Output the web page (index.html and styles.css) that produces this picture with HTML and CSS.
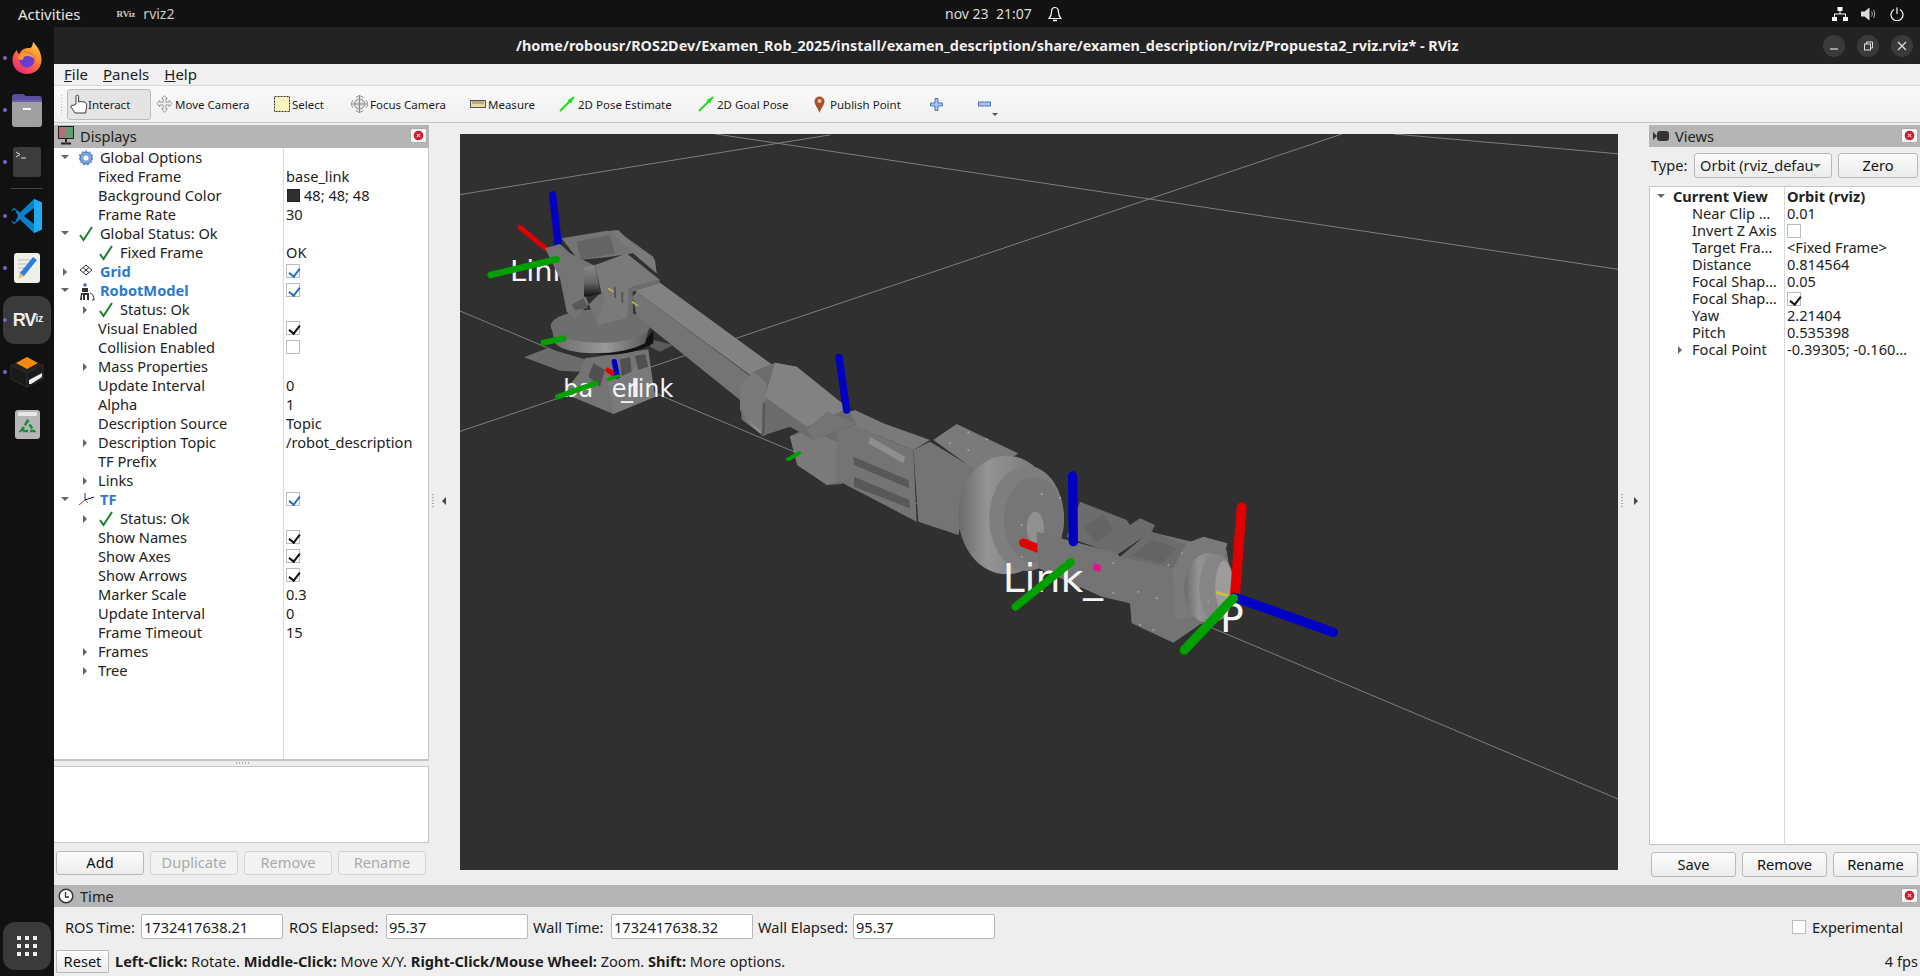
FILE: index.html
```html
<!DOCTYPE html>
<html lang="es"><head><meta charset="utf-8"><title>RViz</title><link rel="stylesheet" href="styles.css"></head>
<body>
<header class="topbar">
  <span class="activities">Activities</span>
  <span class="appname"><b class="miniviz">RViz</b>rviz2</span>
  <span class="clock">nov 23&nbsp;&nbsp;21:07
    <svg class="bell" width="14" height="16" viewBox="0 0 14 16"><path d="M7 1.500C4.500 1.500 3.500 3.500 3.500 6C3.500 9 2.500 11 1 12.500H13C11.500 11 10.500 9 10.500 6C10.500 3.500 9.500 1.500 7 1.500Z" fill="none" stroke="#fff" stroke-width="1.200"/><path d="M5 14.500H9" stroke="#fff" stroke-width="1.500"/></svg>
  </span>
  <span class="tray">
    <svg width="16" height="14" viewBox="0 0 16 14" fill="#fff"><rect x="5.500" y="0" width="5" height="4"/><rect x="0" y="10" width="5" height="4"/><rect x="11" y="10" width="5" height="4"/><path d="M7.500 4h1v2.500h5.500v3.500h-1v-2.500h-10v2.500h-1v-3.500h5.500z"/></svg>
    <svg width="16" height="14" viewBox="0 0 16 14" fill="#ddd"><path d="M0 4.500h3.500L8.500 0.500v13l-5-4H0z"/><path d="M10.500 4.500c1 1.500 1 3.500 0 5M12.500 3c1.600 2.400 1.600 5.600 0 8" stroke="#aaa" fill="none"/></svg>
    <svg width="14" height="14" viewBox="0 0 14 14" fill="none" stroke="#fff" stroke-width="1.200"><path d="M4 2.500A6 6 0 1 0 10 2.500"/><path d="M7 0.500V7"/></svg>
  </span>
</header>
<div class="desktop">
  <nav class="dock">
    <div class="dock-item"><i class="pip"></i>
      <svg width="30" height="32" viewBox="0 0 30 32"><defs><linearGradient id="ffa" x1="0.800" y1="0" x2="0.200" y2="1"><stop offset="0" stop-color="#ffd43a"/><stop offset=".45" stop-color="#ff7a2e"/><stop offset="1" stop-color="#ec1e7c"/></linearGradient></defs><path d="M15 32C6 32 .5 25.500 .5 18C.5 13 3 10 5 8C5 10 6 11.500 7.500 12C9 8 12 6 17 6C19 6 20.500 5 21 0C25 4 29.500 10 29.500 18C29.500 25.500 24 32 15 32Z" fill="url(#ffa)"/><circle cx="15" cy="18" r="7.500" fill="#6b3bd6"/><path d="M6 15C8 11 13 9.500 18 11.500C21 12.800 22.500 15.500 22.500 17C20.500 14.500 17 13.500 14 14C11 14.500 12 17 10 18C8 18.500 6.500 17 6 15Z" fill="#ff9a2e"/></svg></div>
    <div class="dock-item"><i class="pip"></i>
      <svg width="32" height="34" viewBox="0 0 32 34"><path d="M1 4Q1 1 4 1H12L15 3H28Q31 3 31 6V12H1Z" fill="#5a4f99"/><rect x="1" y="7" width="30" height="27" rx="3" fill="#a0a0a0"/><rect x="1" y="7" width="30" height="2" fill="#6a5fb0"/><rect x="12" y="15" width="8" height="2" fill="#fff"/></svg></div>
    <div class="dock-item"><i class="pip"></i>
      <svg width="28" height="30" viewBox="0 0 28 30"><rect width="28" height="30" rx="3" fill="#3c3c3c"/><path d="M3 5L7 7.500L3 10" stroke="#ddd" fill="none"/><path d="M8 11H13" stroke="#ddd"/></svg></div>
    <div class="dock-sep"></div>
    <div class="dock-item"><i class="pip"></i>
      <svg width="30" height="34" viewBox="0 0 30 34"><path d="M22 0L30 3.500V30.500L22 34L8 20.500L2.500 25L0 23.500V10.500L2.500 9L8 13.500Z" fill="#0a7fc9"/><path d="M22 0L30 3.500V30.500L22 34Z" fill="#23a9f2"/><path d="M22 9L12 17L22 25Z" fill="#111"/><path d="M0 12L3 10.500L6 17L3 23.500L0 22Z" fill="#111"/></svg></div>
    <div class="dock-item"><i class="pip"></i>
      <svg width="26" height="30" viewBox="0 0 26 30"><rect width="26" height="30" rx="3" fill="#f0f0ea"/><path d="M4 7H18M4 11H15M4 15H13M4 19H9" stroke="#bbb"/><path d="M6 20L19 4L23 7L10 23L5 25Z" fill="#2f7de1"/><path d="M6 20L10 23L4 26Z" fill="#f0c070"/></svg></div>
    <div class="dock-item dock-active"><i class="pip"></i><span class="rviz-logo">RV<small>iz</small></span></div>
    <div class="dock-item"><i class="pip"></i>
      <svg width="34" height="32" viewBox="0 0 34 32"><path d="M17 1L33 9L17 17L1 9Z" fill="#222"/><path d="M17 1L28 7L17 13L6 7Z" fill="#f28a10"/><path d="M1 9L17 17V31L1 23Z" fill="#1a1a1a" stroke="#2e2e2e"/><path d="M17 17L33 9V23L17 31Z" fill="#1a1a1a" stroke="#2e2e2e"/><path d="M19 24L32 17V21L21 28L19 28Z" fill="#eee"/></svg></div>
    <div class="dock-item"><i class="pip pip-off"></i>
      <svg width="25" height="29" viewBox="0 0 25 29"><rect width="25" height="29" rx="3" fill="#b6b6b6"/><rect x="3" y="2" width="19" height="4" rx="1" fill="#e8e8e8"/><path d="M12.500 11L8.500 17.500L6 21H19L16.500 17.500Z" fill="none" stroke="#1b8a3c" stroke-width="2.500" stroke-dasharray="5 2"/></svg></div>
    <div class="dock-grid"><span class="grid-dots"><i></i><i></i><i></i><i></i><i></i><i></i><i></i><i></i><i></i></span></div>
  </nav>
  <main class="window">
    <div class="titlebar">
      <span class="wintitle">/home/robousr/ROS2Dev/Examen_Rob_2025/install/examen_description/share/examen_description/rviz/Propuesta2_rviz.rviz* - RViz</span>
      <span class="winbtns">
        <span class="winbtn"><svg width="10" height="10" viewBox="0 0 10 10"><path d="M1 8H9" stroke="#ddd" stroke-width="1.200"/></svg></span>
        <span class="winbtn"><svg width="10" height="10" viewBox="0 0 10 10" fill="none" stroke="#ddd"><rect x="1.500" y="3" width="6" height="6"/><path d="M3.500 3V1H9.500V7H7.500"/></svg></span>
        <span class="winbtn"><svg width="10" height="10" viewBox="0 0 10 10"><path d="M1 1L9 9M9 1L1 9" stroke="#ddd" stroke-width="1.300"/></svg></span>
      </span>
    </div>
    <div class="menubar"><span><u>F</u>ile</span><span><u>P</u>anels</span><span><u>H</u>elp</span></div>
    <div class="toolbar">
      <i class="grip"></i>
      <span class="tool tool-on t-interact"><svg width="18" height="20" viewBox="0 0 18 20" fill="#fff" stroke="#222" stroke-width=".9"><path d="M6 10V2.500a1.300 1.300 0 0 1 2.600 0V8c.8-.6 5-.6 7 .5 1 .6 1.200 2 1 4l-1 6.500H5L1 13c-.6-1 .6-2.400 2-1.500z"/></svg>Interact</span>
      <span class="tool t-move"><svg width="17" height="20" viewBox="0 0 18 20" fill="#eee" stroke="#888" stroke-width=".8"><path d="M9 1L12 4.500H10.500V8H14V6L17 9.500L14 13V11H10.500V15H12L9 19L6 15H7.500V11H4V13L1 9.500L4 6V8H7.500V4.500H6Z"/></svg>Move Camera</span>
      <span class="tool t-select"><svg width="16" height="16" viewBox="0 0 16 16"><rect x=".5" y=".5" width="15" height="15" fill="#fbf6bd" stroke="#333" stroke-dasharray="2 1"/></svg>Select</span>
      <span class="tool t-focus"><svg width="17" height="20" viewBox="0 0 18 20" fill="none" stroke="#888"><circle cx="9" cy="10" r="5.500" fill="#ddd"/><path d="M9 1V19M0 10H18M5 3L9 1L13 3M5 17L9 19L13 17M2 6L0 10L2 14M16 6L18 10L16 14"/></svg>Focus Camera</span>
      <span class="tool t-measure"><svg width="16" height="8" viewBox="0 0 16 8"><rect x=".5" y=".5" width="15" height="7" fill="#e8dca0" stroke="#555"/><path d="M3 1V4M5 1V4M7 1V4M9 1V4M11 1V4M13 1V4" stroke="#555" stroke-width=".7"/></svg>Measure</span>
      <span class="tool t-pose"><svg width="16" height="16" viewBox="0 0 16 16"><path d="M1 15L15 1" stroke="#1de01d" stroke-width="2"/><path d="M15 1L8.500 4L12 7.500Z" fill="#1de01d"/></svg>2D Pose Estimate</span>
      <span class="tool t-goal"><svg width="16" height="16" viewBox="0 0 16 16"><path d="M1 15L15 1" stroke="#1de01d" stroke-width="2"/><path d="M15 1L8.500 4L12 7.500Z" fill="#1de01d"/></svg>2D Goal Pose</span>
      <span class="tool t-point"><svg width="11" height="17" viewBox="0 0 11 17"><path d="M5.500 17C4 12 .5 9 .5 5.500a5 5 0 0 1 10 0C10.500 9 7 12 5.500 17Z" fill="#a8502c"/><circle cx="5.500" cy="5" r="2" fill="#f3c3a0"/></svg>Publish Point</span>
      <span class="tool t-plus"><svg width="13" height="13" viewBox="0 0 13 13"><path d="M5 .5H8V5H12.500V8H8V12.500H5V8H.5V5H5Z" fill="#a9c4ea" stroke="#4a78b8"/></svg></span>
      <span class="tool t-minus"><svg width="13" height="6" viewBox="0 0 13 6"><rect x=".5" y="1" width="12" height="4" fill="#a9c4ea" stroke="#4a78b8"/></svg><i class="tool-more"></i></span>
    </div>
    <div class="work">
      <section class="displays">
        <div class="dockhead dh-d"><svg class="dh-ico" width="16" height="19" viewBox="0 0 16 19"><rect x=".5" y=".5" width="15" height="12" fill="#5f9d74" stroke="#222"/><rect x="1.500" y="1.500" width="6" height="10" fill="#b96a7b"/><path d="M8 13V16M3 17.500H13" stroke="#222" stroke-width="2"/></svg><span>Displays</span><svg class="dh-close" width="17" height="15" viewBox="0 0 17 15"><rect x=".5" y=".5" width="16" height="14" rx="2" fill="#f8f8f8" stroke="#aaa"/><circle cx="8.500" cy="7.500" r="4.800" fill="#c8202c"/><path d="M6.800 5.800L10.200 9.200M10.200 5.800L6.800 9.200" stroke="#f3c0c0" stroke-width="1.100"/></svg></div>
        <div class="tree dtree">
          <div class="row"><i class="tw open a0"></i><svg class="ic" width="14" height="16" viewBox="0 0 14 16"><circle cx="7" cy="8" r="6" fill="#7ea4dc" stroke="#3f6fb5"/><circle cx="7" cy="8" r="2.500" fill="#fff"/><circle cx="7" cy="8" r="7" fill="none" stroke="#3f6fb5" stroke-dasharray="2 2" stroke-width="1"/></svg><span class="l l0">Global Options</span><span class="v"></span></div>
          <div class="row"><span class="l l1">Fixed Frame</span><span class="v">base_link</span></div>
          <div class="row"><span class="l l1">Background Color</span><span class="v"><i class="swatch"></i>48; 48; 48</span></div>
          <div class="row"><span class="l l1">Frame Rate</span><span class="v">30</span></div>
          <div class="row"><i class="tw open a0"></i><svg class="ic" width="14" height="16" viewBox="0 0 14 16"><path class="ck" d="M1 9L4.500 14L13 1"/></svg><span class="l l0">Global Status: Ok</span><span class="v"></span></div>
          <div class="row"><svg class="ic i1" width="14" height="16" viewBox="0 0 14 16"><path class="ck" d="M1 9L4.500 14L13 1"/></svg><span class="l l1s">Fixed Frame</span><span class="v">OK</span></div>
          <div class="row"><i class="tw a0"></i><svg class="ic" width="14" height="12" viewBox="0 0 14 12" fill="none" stroke="#333"><path d="M7 1L13 6L7 11L1 6Z"/><path d="M4 3.500L10 8.500M10 3.500L4 8.500"/></svg><span class="l l0 blue">Grid</span><span class="v"><i class="cb on-b"></i></span></div>
          <div class="row"><i class="tw open a0"></i><svg class="ic" width="16" height="18" viewBox="0 0 16 18" fill="#333"><circle cx="6" cy="2" r="1.800" fill="#3f6fb5"/><rect x="3" y="5" width="6" height="4"/><path d="M2 10H10V17H8V12H6V17H4V12H3V17H1Z"/><path d="M11 10Q15 11 15 17H13" fill="none" stroke="#333"/></svg><span class="l l0 blue">RobotModel</span><span class="v"><i class="cb on-b"></i></span></div>
          <div class="row"><i class="tw a1"></i><svg class="ic i1" width="14" height="16" viewBox="0 0 14 16"><path class="ck" d="M1 9L4.500 14L13 1"/></svg><span class="l l1s">Status: Ok</span><span class="v"></span></div>
          <div class="row"><span class="l l1">Visual Enabled</span><span class="v"><i class="cb on"></i></span></div>
          <div class="row"><span class="l l1">Collision Enabled</span><span class="v"><i class="cb"></i></span></div>
          <div class="row"><i class="tw a1"></i><span class="l l1">Mass Properties</span><span class="v"></span></div>
          <div class="row"><span class="l l1">Update Interval</span><span class="v">0</span></div>
          <div class="row"><span class="l l1">Alpha</span><span class="v">1</span></div>
          <div class="row"><span class="l l1">Description Source</span><span class="v">Topic</span></div>
          <div class="row"><i class="tw a1"></i><span class="l l1">Description Topic</span><span class="v">/robot_description</span></div>
          <div class="row"><span class="l l1">TF Prefix</span><span class="v"></span></div>
          <div class="row"><i class="tw a1"></i><span class="l l1">Links</span><span class="v"></span></div>
          <div class="row"><i class="tw open a0"></i><svg class="ic" width="16" height="14" viewBox="0 0 16 14" fill="none"><path d="M6 8V1" stroke="#1f1fc8"/><path d="M6 8L15 5" stroke="#111"/><path d="M6 8L0 13" stroke="#e02020"/><path d="M6 8L9 11" stroke="#22b022"/></svg><span class="l l0 blue">TF</span><span class="v"><i class="cb on-b"></i></span></div>
          <div class="row"><i class="tw a1"></i><svg class="ic i1" width="14" height="16" viewBox="0 0 14 16"><path class="ck" d="M1 9L4.500 14L13 1"/></svg><span class="l l1s">Status: Ok</span><span class="v"></span></div>
          <div class="row"><span class="l l1">Show Names</span><span class="v"><i class="cb on"></i></span></div>
          <div class="row"><span class="l l1">Show Axes</span><span class="v"><i class="cb on"></i></span></div>
          <div class="row"><span class="l l1">Show Arrows</span><span class="v"><i class="cb on"></i></span></div>
          <div class="row"><span class="l l1">Marker Scale</span><span class="v">0.3</span></div>
          <div class="row"><span class="l l1">Update Interval</span><span class="v">0</span></div>
          <div class="row"><span class="l l1">Frame Timeout</span><span class="v">15</span></div>
          <div class="row"><i class="tw a1"></i><span class="l l1">Frames</span><span class="v"></span></div>
          <div class="row"><i class="tw a1"></i><span class="l l1">Tree</span><span class="v"></span></div>
          <div class="filler"></div>
        </div>
        <div class="hsplit"></div>
        <div class="descbox"></div>
        <div class="btnrow d-btns"><span class="btn">Add</span><span class="btn off">Duplicate</span><span class="btn off">Remove</span><span class="btn off">Rename</span></div>
      </section>
      <div class="vsplit"><i class="arrow-l"></i></div>
      <section class="viewport">
        <svg class="scene" viewBox="460 134 1158 736" width="1158" height="736">
          <defs>
            <linearGradient id="cyl" x1="0" y1="0" x2="1" y2="0"><stop offset="0" stop-color="#6a6a6a"/><stop offset=".3" stop-color="#949494"/><stop offset="1" stop-color="#707070"/></linearGradient>
            <linearGradient id="disc" x1="0" y1="0" x2="1" y2="0"><stop offset="0" stop-color="#6a6a6a"/><stop offset=".55" stop-color="#989898"/><stop offset="1" stop-color="#5a5a5a"/></linearGradient>
            <linearGradient id="shoulder" x1="0" y1="0" x2="0" y2="1"><stop offset="0" stop-color="#888"/><stop offset=".55" stop-color="#666"/><stop offset="1" stop-color="#111"/></linearGradient>
          </defs>
          <g class="gridlines">
            <path d="M460 194.600L830.600 134.800"/>
            <path d="M715.700 134L1618 269.300"/>
            <path d="M1342 134L460 431.400"/>
            <path d="M1394 134L1618 153.800"/>
            <path d="M460 311L1618 799"/>
          </g>
          <g transform="translate(460 170) scale(.33333)">
            <text class="lbl f87" x="150" y="333">Link</text>
            <rect x="553" y="517" width="28" height="6" fill="#eee"/>
            <path class="axis" d="M180 172L260 238" stroke="#e00000" stroke-width="14"/>
            <path class="axis" d="M278 75L295 225" stroke="#0000c4" stroke-width="22"/>
            <path class="m2" d="M192 562L262 535L400 575L360 605L300 602Z"/>
            <path class="m1" d="M375 565L565 538L585 680L460 732L310 670L360 605Z"/>
            <path class="m3" d="M440 625L568 578L585 680L460 732Z"/>
            <path class="dk" d="M400 580L435 600L420 650L385 620Z"/>
            <path class="dk" d="M480 568L510 562L515 605L485 618Z"/>
            <path class="dk" d="M525 558L555 552L565 590L535 600Z"/>
            <path d="M560 505L640 525L600 545L570 530Z" fill="#5b5b5b"/>
            <path d="M380 545C450 560 540 545 580 480L580 520C530 550 450 565 380 545Z" fill="#111"/>
            <path d="M273 465L285 520C320 560 480 560 555 520L570 465Z" fill="url(#disc)"/>
            <ellipse cx="421" cy="468" rx="149" ry="50" fill="#6e6e6e"/>
            <path class="m1" d="M345 445L320 425L300 325L255 235L300 222L330 250L400 285L375 375L412 465L500 440L495 395L420 370Z"/>
            <path class="m3" d="M410 465L440 370L505 410L500 445Z"/>
            <path class="dk2" d="M335 405L370 385L385 415L345 420Z"/>
            <path class="m1" d="M305 205L440 182L475 185L580 260L590 310L520 250L440 262L355 270Z"/>
            <path class="m5" d="M350 215L450 195L465 250L362 270Z"/>
            <path class="m3" d="M450 182L475 180L510 215L585 270L590 310L520 250Z"/>
            <path d="M372 292L405 285L422 372L372 380Z" fill="url(#shoulder)"/>
            <path class="m3" d="M405 285L500 250L600 330L515 352L505 430L425 372Z"/>
            <path class="m2" d="M505 355L597 328L600 338L518 365L520 440L505 432Z"/>
            <path class="m1" d="M518 380L530 365L880 625L840 690L530 440Z"/>
            <path class="m4" d="M525 362L600 338L945 590L870 615Z"/>
            <path d="M445 355L460 365M515 395L535 408" stroke="#c8c040" stroke-width="4"/>
            <path class="dk2" d="M483 365L490 367L490 400L484 398ZM462 350L468 352L468 385L462 383Z"/>
            <path class="axis" d="M92 315L290 268" stroke="#00a000" stroke-width="20"/>
            <path class="axis" d="M250 518L310 505" stroke="#00a000" stroke-width="18"/>
            <path class="axis" d="M443 600L460 612" stroke="#e00000" stroke-width="14"/>
            <path class="axis" d="M463 575L472 618" stroke="#0000c4" stroke-width="16"/>
            <path class="axis" d="M445 628L475 618" stroke="#00a000" stroke-width="10"/>
            <text class="lbl f72" x="310" y="680">ba</text>
            <text class="lbl f72" x="455" y="680">er</text>
            <text class="lbl f72" x="483" y="680">_l</text>
            <text class="lbl f72" x="513" y="680">link</text>
            <path class="axis" d="M293 680L408 640" stroke="#00a000" stroke-width="16"/>
          </g>
          <g transform="translate(460 130) scale(.7413 .4785)">
            <path class="m2" d="M505 595L575 620L525 700L515 740L495 742L455 700L445 640Z"/>
            <path class="m3" d="M445 640L470 628L520 645L525 665L510 735L495 742L455 700Z"/>
            <path d="M378 565L400 510L425 490L470 560L410 640L380 605Z" fill="url(#cyl)"/>
            <path class="m3" d="M425 490L450 495L525 590L470 640L408 560Z"/>
            <path class="m2" d="M465 625L525 585L550 600L575 622L525 660L505 650Z"/>
            <path class="dk2" d="M408 575L412 640L406 640Z"/>
            <path class="axis" d="M443 688L457 675" stroke="#00a000" stroke-width="7"/>
            <path class="axis" d="M512 480L520 590" stroke="#0000c4" stroke-width="8"/>
          </g>
          <g transform="translate(850 400) scale(.33333)">
            <path class="m1" d="M-40 55L190 150L200 365L-40 240Z"/>
            <path class="dk2" d="M10 170L175 240L178 265L12 195Z"/>
            <path class="dk2" d="M12 230L178 300L180 325L12 260Z"/>
            <path class="m3" d="M-40 55L15 30L100 70L240 120L190 150Z"/>
            <path d="M60 110L165 170L160 190L55 130Z" fill="#8e8e8e"/>
            <path class="m1" d="M190 150L240 125L380 210L360 260L325 405L205 365Z"/>
            <path class="m3" d="M250 120L320 72L505 160L400 235L375 210Z"/>
            <ellipse cx="470" cy="345" rx="145" ry="178" fill="url(#cyl)"/>
            <ellipse cx="530" cy="355" rx="112" ry="158" fill="#7e7e7e"/>
            <ellipse cx="552" cy="360" rx="90" ry="128" fill="#767676"/>
            <ellipse cx="556" cy="385" rx="26" ry="50" fill="#909090"/>
            <path class="axis" d="M520 428L562 445" stroke="#e00000" stroke-width="26"/>
            <path class="m2" d="M690 305L830 360L840 375L870 355L915 375L905 395L800 465L650 410Z"/>
            <path class="m1" d="M560 395L800 460L810 470L900 395L1130 450L1150 590L1040 680L970 728L845 670L840 610L755 590L565 505Z"/>
            <path class="m2" d="M812 470L905 395L1010 435L968 505Z"/>
            <path class="m5" d="M845 465L908 420L980 445L935 490Z"/>
            <path class="m5" d="M700 380L760 345L790 390L740 430Z"/>
            <path class="m3" d="M970 505L1010 430L1060 410L1132 430L1080 640L975 660Z"/>
            <path class="m1" d="M650 450L715 450L730 475L715 545L680 570L640 520Z"/>
            <ellipse cx="1075" cy="565" rx="72" ry="105" fill="url(#cyl)"/>
            <ellipse cx="1100" cy="562" rx="52" ry="100" fill="#858585"/>
            <ellipse cx="1122" cy="560" rx="26" ry="78" fill="#9c9c9c"/>
            <path d="M730 490L752 495L752 516L730 510Z" fill="#e0148c"/>
            <path d="M1098 577L1135 587" stroke="#c8c040" stroke-width="9"/>
            <path class="holes" d="M575 283h.1M630 293h.1M515 375h.1M515 470h.1M660 410h.1M790 490h.1M865 575h.1M920 595h.1M870 675h.1M910 690h.1M790 578h.1M1110 520h.1M1075 605h.1M955 495h.1M995 460h.1M300 130h.1M355 98h.1M410 118h.1M355 150h.1"/>
            <text class="lbl f122" x="458" y="575">Link_</text>
            <text class="lbl f122" x="1110" y="695">P</text>
            <path class="axis" d="M668 228L670 425" stroke="#0000c4" stroke-width="28"/>
            <path class="axis" d="M497 620L662 487" stroke="#00a000" stroke-width="24"/>
            <path class="axis" d="M1175 322L1155 585" stroke="#e00000" stroke-width="30"/>
            <path class="axis" d="M1155 592L1450 697" stroke="#0000c4" stroke-width="28"/>
            <path class="axis" d="M1150 595L1003 750" stroke="#00a000" stroke-width="28"/>
          </g>
          <g transform="translate(460 170) scale(.33333)">
            <path class="m2" d="M840 650L880 605L945 578L1010 590L1165 715L1190 765L1060 810L990 770L915 795L840 720Z"/>
            <path class="m3" d="M840 650L880 605L920 640L910 790L840 720Z"/>
            <path class="m4" d="M945 578L1010 590L1165 715L1040 770L915 680Z"/>
            <path class="m1" d="M1040 780L1100 725L1190 760L1060 810Z"/>
            <path class="dk2" d="M908 700L916 695L914 790L906 785Z"/>
            <path class="axis" d="M1137 562L1160 720" stroke="#0000c4" stroke-width="22"/>
          </g>
        </svg>
      </section>
      <div class="vsplit vsplit-r"><i class="arrow-r"></i></div>
      <section class="views">
        <div class="dockhead vh"><svg class="dh-ico" width="16" height="10" viewBox="0 0 16 10" fill="#333"><path d="M0 1L4 5L0 9Z"/><rect x="4" y="0" width="12" height="10" rx="3"/></svg><span>Views</span><svg class="dh-close" width="17" height="15" viewBox="0 0 17 15"><rect x=".5" y=".5" width="16" height="14" rx="2" fill="#f8f8f8" stroke="#aaa"/><circle cx="8.500" cy="7.500" r="4.800" fill="#c8202c"/><path d="M6.800 5.800L10.200 9.200M10.200 5.800L6.800 9.200" stroke="#f3c0c0" stroke-width="1.100"/></svg></div>
        <div class="typerow"><span class="typelabel">Type:</span><span class="combo"><span class="combo-t">Orbit (rviz_defau</span><i class="combo-a"></i></span><span class="btn zero">Zero</span></div>
        <div class="tree vtree">
          <div class="vrow"><i class="tw open v0"></i><span class="vl vb">Current View</span><span class="vv vb">Orbit (rviz)</span></div>
          <div class="vrow"><span class="vl">Near Clip …</span><span class="vv">0.01</span></div>
          <div class="vrow"><span class="vl">Invert Z Axis</span><span class="vv"><i class="cb"></i></span></div>
          <div class="vrow"><span class="vl">Target Fra…</span><span class="vv">&lt;Fixed Frame&gt;</span></div>
          <div class="vrow"><span class="vl">Distance</span><span class="vv">0.814564</span></div>
          <div class="vrow"><span class="vl">Focal Shap…</span><span class="vv">0.05</span></div>
          <div class="vrow"><span class="vl">Focal Shap…</span><span class="vv"><i class="cb on"></i></span></div>
          <div class="vrow"><span class="vl">Yaw</span><span class="vv">2.21404</span></div>
          <div class="vrow"><span class="vl">Pitch</span><span class="vv">0.535398</span></div>
          <div class="vrow"><i class="tw v1"></i><span class="vl">Focal Point</span><span class="vv">-0.39305; -0.160…</span></div>
          <div class="filler vfill"></div>
        </div>
        <div class="btnrow v-btns"><span class="btn">Save</span><span class="btn">Remove</span><span class="btn">Rename</span></div>
      </section>
    </div>
    <section class="timepanel">
      <div class="dockhead th"><svg class="dh-ico" width="16" height="16" viewBox="0 0 16 16" fill="none"><circle cx="8" cy="8" r="6.800" fill="#fff" stroke="#333" stroke-width="1.500"/><path d="M7.500 4V9H11" stroke="#333" stroke-width="1.300"/></svg><span>Time</span><svg class="dh-close" width="17" height="15" viewBox="0 0 17 15"><rect x=".5" y=".5" width="16" height="14" rx="2" fill="#f8f8f8" stroke="#aaa"/><circle cx="8.500" cy="7.500" r="4.800" fill="#c8202c"/><path d="M6.800 5.800L10.200 9.200M10.200 5.800L6.800 9.200" stroke="#f3c0c0" stroke-width="1.100"/></svg></div>
      <div class="timerow">
        <span class="tl tl1">ROS Time:</span><span class="inp">1732417638.21</span>
        <span class="tl tl2">ROS Elapsed:</span><span class="inp">95.37</span>
        <span class="tl tl3">Wall Time:</span><span class="inp">1732417638.32</span>
        <span class="tl tl4">Wall Elapsed:</span><span class="inp">95.37</span>
        <span class="exp"><i class="cb"></i>Experimental</span>
      </div>
      <div class="statusrow"><span class="btn reset">Reset</span><span class="hint"><b>Left-Click:</b> Rotate. <b>Middle-Click:</b> Move X/Y. <b>Right-Click/Mouse Wheel:</b> Zoom. <b>Shift:</b> More options.</span><span class="fps">4 fps</span></div>
    </section>
  </main>
</div>
</body></html>
```
FILE: styles.css
```css
*{box-sizing:border-box}
html,body{margin:0;padding:0;width:1920px;height:976px;overflow:hidden}
body{display:flex;flex-direction:column;font-family:"Noto Sans",sans-serif;font-size:14.6px;color:#1c1c1c;background:#efefef}
.topbar{height:27px;background:#121212;color:#e6e6e6;position:relative;display:flex;align-items:center;font-size:15px;flex:none}
.activities{margin-left:18px}
.appname{margin-left:36px;display:flex;align-items:center;color:#c8c8c8;font-size:14px}
.miniviz{font:bold 9px "Liberation Serif",serif;margin-right:8px;color:#ccc}
.clock{position:absolute;left:945px;top:4px;color:#ddd;display:flex;gap:16px;align-items:center;font-size:14px}
.tray{margin-left:auto;margin-right:16px;display:flex;gap:13px;align-items:center}
.desktop{flex:1;display:flex;min-height:0}
.dock{width:54px;background:#111;flex:none;display:flex;flex-direction:column;align-items:center;position:relative;padding-top:5px}
.dock-item{width:54px;height:52px;display:flex;align-items:center;justify-content:center;position:relative;flex:none}
.dock-sep{width:32px;height:1px;background:#444;margin:0 0 1px}
.pip{position:absolute;left:3px;top:50%;width:4px;height:4px;border-radius:50%;background:#7466c9;margin-top:-2px}
.pip-off{display:none}
.dock-active{background:#3a3a3a;border-radius:12px;width:48px;height:48px;margin:2px auto}
.dock-active .pip{left:0}
.rviz-logo{font:bold 18px "Liberation Sans",sans-serif;color:#eee;letter-spacing:-1px;margin-left:2px}
.rviz-logo small{font-size:10px;vertical-align:4px;letter-spacing:0}
.dock-grid{margin-top:auto;margin-bottom:6px;width:48px;height:48px;background:#3a3a3a;border-radius:12px;display:flex;align-items:center;justify-content:center}
.grid-dots{display:grid;grid-template-columns:repeat(3,4px);gap:4px}
.grid-dots i{width:4px;height:4px;background:#eee}
.window{flex:1;min-width:0;display:flex;flex-direction:column}
.titlebar{height:37px;background:#232323;color:#f0f0f0;display:flex;align-items:center;position:relative;flex:none}
.wintitle{position:absolute;left:462px;font-weight:700;font-size:14.400px;white-space:nowrap}
.winbtns{margin-left:auto;margin-right:7px;display:flex;gap:12px}
.winbtn{width:22px;height:22px;border-radius:50%;background:#3a3a3a;display:flex;align-items:center;justify-content:center}
.menubar{height:21px;background:#f0f0f0;display:flex;gap:15px;padding:0 0 2px 10px;align-items:center;flex:none;font-size:15px}
.toolbar{height:38px;background:linear-gradient(#fafafa,#f0f0f0);border-top:1px solid #d8d8d8;border-bottom:1px solid #c4c4c4;display:flex;align-items:center;position:relative;flex:none;font-size:11.500px}
.grip{width:3px;height:20px;margin:0 4px 0 6px;background:radial-gradient(#bbb 40%,transparent 45%) 0 0/3px 3px;flex:none}
.tool{display:flex;align-items:center;height:31px;white-space:nowrap;flex:none}
.tool-on{background:#e4e4e4;border:1px solid #bbb;border-radius:3px;width:84px;padding-left:2px}
.t-move{margin-left:5px;width:118px;gap:2px}
.t-select{width:77px;gap:2px}
.t-focus{width:119px;gap:2px}
.t-measure{width:89px;gap:2px}
.t-pose{width:139px;gap:3px}
.t-goal{width:116px;gap:3px}
.t-point{width:115px;gap:5px}
.t-plus{width:48px;padding-left:1px}
.t-minus{width:40px;position:relative;padding-left:1px}
.tool-more{position:absolute;left:15px;bottom:4px;border:3px solid transparent;border-top:3px solid #555;border-bottom:0}
.work{height:762px;display:flex;flex:none;background:#eee}
.displays{width:375px;flex:none;display:flex;flex-direction:column;padding-top:2px}
.dockhead{height:23px;background:#b5b5b5;display:flex;align-items:center;padding-left:4px;gap:6px;position:relative;flex:none;font-size:14.600px;color:#222}
.dh-d{padding-bottom:2px}
.dh-ico{flex:none}
.dh-close{position:absolute;right:2px;top:3px}
.tree{background:#fff;font-size:14.600px;color:#222}
.dtree{height:613px;border-right:1px solid #c6c6c6;border-bottom:2px solid #c6c6c6;display:flex;flex-direction:column}
.row{height:19px;display:flex;align-items:center;position:relative;flex:none;white-space:nowrap}
.filler{flex:1;width:230px;border-right:1px solid #d9d9d9}
.l{position:absolute;top:0;line-height:19px}
.l0{left:46px}
.l1{left:44px}
.l1s{left:66px}
.blue{color:#2a7ad2;font-weight:700}
.v{position:absolute;left:229px;width:145px;height:19px;line-height:19px;border-left:1px solid #d9d9d9;padding-left:2px;display:flex;align-items:center}
.tw{position:absolute;top:6px;border:4px solid transparent;border-left:4px solid #666;border-right:0;margin-left:2px}
.tw.open{border:4px solid transparent;border-top:4px solid #666;border-bottom:0;margin:1px 0 0}
.a0{left:7px}
.a1{left:27px}
.ic{position:absolute;left:25px;top:2px}
.i1{left:45px}
.ck{fill:none;stroke:#1f7f2a;stroke-width:2}
.cb{display:block;width:14px;height:14px;border:1px solid #bcbcbc;background:#fff;position:relative;flex:none}
.v .cb{top:-1px}
.cb.on::after,.cb.on-b::after{content:"";position:absolute;left:4px;top:1px;width:5px;height:9px;border:solid #111;border-width:0 2px 2px 0;transform:rotate(38deg)}
.cb.on-b::after{border-color:#2a6fc0}
.swatch{display:block;width:13px;height:13px;background:#303030;border:1px solid #222;margin:0 4px 0 1px}
.hsplit{height:5px;position:relative}
.hsplit::after{content:"";position:absolute;left:181px;top:1px;width:16px;height:2px;background:radial-gradient(#aaa 40%,transparent 45%) 0 0/3px 2px}
.descbox{height:77px;background:#fff;border:1px solid #c6c6c6;border-left:0}
.btnrow{display:flex}
.d-btns{padding:8px 2px 0;gap:6px}
.btn{display:flex;align-items:center;justify-content:center;height:24px;width:88px;padding-bottom:2px;background:linear-gradient(#fcfcfc,#ececec);border:1px solid #b9b9b9;border-radius:3px;font-size:14.600px;color:#111;flex:none}
.btn.off{color:#aaa;border-color:#d4d4d4;background:#f2f2f2}
.vsplit{width:31px;flex:none;display:flex;align-items:center;justify-content:flex-start;padding:0 0 6px 13px;position:relative}
.vsplit::before{content:"";position:absolute;left:3px;top:370px;width:2px;height:16px;background:radial-gradient(#aaa 40%,transparent 45%) 0 0/2px 3px}
.vsplit-r{padding-left:16px}
.arrow-l{border:4px solid transparent;border-right:4px solid #444;border-left:0}
.arrow-r{border:4px solid transparent;border-left:4px solid #444;border-right:0}
.viewport{width:1158px;height:736px;margin-top:11px;background:#303030;flex:none;overflow:hidden}
.scene{display:block}
.gridlines path{stroke:#7e7e7e;stroke-width:1;fill:none}
.axis{fill:none;stroke-linecap:round}
.m1{fill:#747474}
.m2{fill:#6c6c6c}
.m3{fill:#7a7a7a}
.m4{fill:#828282}
.m5{fill:#646464}
.dk{fill:#505050}
.dk2{fill:#585858}
.holes{stroke:#a4a4a4;stroke-width:6;stroke-linecap:round;fill:none}
.lbl{fill:#f4f4f4;font-family:"DejaVu Sans",sans-serif}
.f87{font-size:87px}
.f72{font-size:72px}
.f122{font-size:118px}
.views{flex:1;min-width:0;display:flex;flex-direction:column;padding-top:2px}
.vh{height:22px}
.typerow{display:flex;align-items:center;height:25px;margin-top:6px;font-size:14.600px}
.typelabel{margin-left:2px;width:43px;padding-bottom:2px}
.combo{width:138px;height:25px;border:1px solid #b9b9b9;border-radius:3px;background:linear-gradient(#fcfcfc,#ececec);display:flex;align-items:center;padding:0 0 2px 5px;position:relative;overflow:hidden;flex:none}
.combo-t{white-space:nowrap}
.combo-a{position:absolute;right:10px;top:10px;border:4px solid transparent;border-top:4px solid #666;border-bottom:0}
.zero{margin-left:6px;width:80px;height:25px}
.vtree{margin-top:8px;height:659px;border:1px solid #c6c6c6;border-right:0;display:flex;flex-direction:column;font-size:14.600px}
.vrow{height:17px;display:flex;align-items:center;position:relative;flex:none;white-space:nowrap}
.vrow:first-child{height:18px}
.vl{position:absolute;left:42px;line-height:17px}
.vb{font-weight:700}
.vl.vb{left:23px}
.vv{position:absolute;left:134px;width:136px;height:100%;border-left:1px solid #d9d9d9;padding-left:2px;line-height:17px;display:flex;align-items:center}
.v0{left:7px}
.v1{left:26px;top:5px}
.vfill{width:135px}
.v-btns{padding:7px 2px 0;gap:6px}
.v-btns .btn{width:85px;height:25px}
.timepanel{flex:1;display:flex;flex-direction:column;background:#eee;min-height:0}
.th{height:22px}
.timerow{height:25px;margin-top:7px;display:flex;align-items:center;position:relative;flex:none}
.tl{flex:none}
.tl1{margin-left:11px;width:76px}
.tl2{margin-left:6px;width:97px}
.tl3{margin-left:5px;width:78px}
.tl4{margin-left:5px;width:95px}
.inp{width:142px;height:25px;background:#fff;border:1px solid #b9b9b9;border-radius:2px;padding-left:2px;display:flex;align-items:center;flex:none}
.exp{margin-left:auto;margin-right:17px;display:flex;align-items:center;gap:6px}
.statusrow{height:23px;margin-top:11px;display:flex;align-items:center;padding-left:2px;flex:none}
.reset{width:53px;height:23px;border-radius:1px;flex:none}
.hint{margin:-2px 0 0 6px}
.hint b{font-weight:700}
.fps{margin:-2px 2px 0 auto}
```
